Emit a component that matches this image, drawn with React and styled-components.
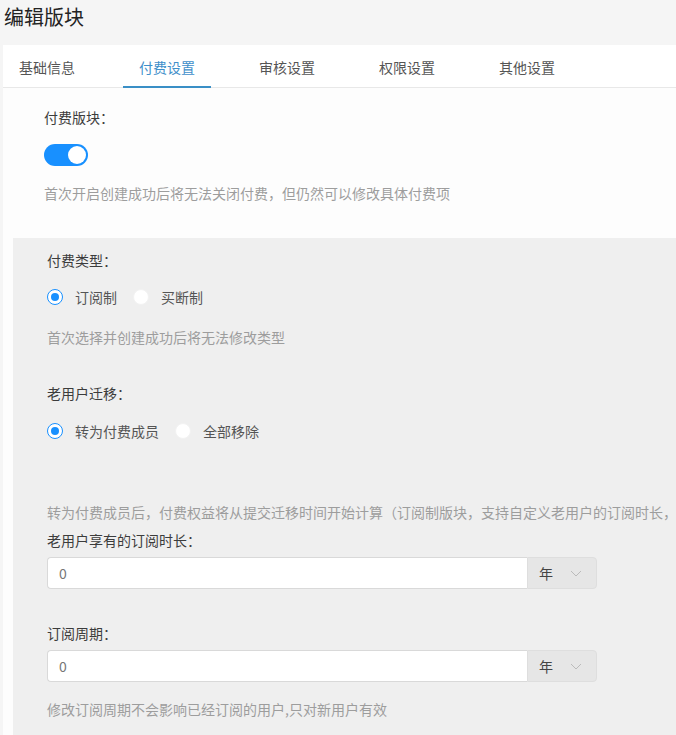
import styled, { createGlobalStyle } from "styled-components";
import { useState } from "react";

const GlobalStyle = createGlobalStyle`
  html, body {
    margin: 0;
    padding: 0;
    background: #f5f5f5;
    overflow: hidden;
  }
  body {
    font-family: "Noto Sans CJK SC", "Noto Sans", "Liberation Sans", sans-serif;
    font-size: 14px;
    color: #333;
  }
`;

const tabs = ["基础信息", "付费设置", "审核设置", "权限设置", "其他设置"];

function Radio({ checked, label, onClick }) {
  return (
    <RadioItem onClick={onClick}>
      <RadioDot checked={checked} />
      <span>{label}</span>
    </RadioItem>
  );
}

function PeriodInput({ value }) {
  return (
    <InputGroup>
      <NumberInput defaultValue={value} />
      <Addon>
        <span>年</span>
        <svg width="12" height="7" viewBox="0 0 12 7">
          <polyline points="1,1 6,6 11,1" fill="none" stroke="#bbb" strokeWidth="1" />
        </svg>
      </Addon>
    </InputGroup>
  );
}

export default function App() {
  const [activeTab, setActiveTab] = useState(1);
  const [paid, setPaid] = useState(true);
  const [payType, setPayType] = useState(0);
  const [migrate, setMigrate] = useState(0);

  return (
    <>
      <GlobalStyle />
      <Title>编辑版块</Title>
      <Card>
        <TabBar>
          {tabs.map((t, i) => (
            <Tab key={t} active={i === activeTab} onClick={() => setActiveTab(i)}>
              {t}
            </Tab>
          ))}
        </TabBar>

        <Section>
          <Label>付费版块：</Label>
          <Switch on={paid} onClick={() => setPaid(!paid)} style={{ marginTop: 17 }} />
          <Hint style={{ marginTop: 17 }}>首次开启创建成功后将无法关闭付费，但仍然可以修改具体付费项</Hint>
        </Section>

        <Panel>
          <Label>付费类型：</Label>
          <RadioRow style={{ marginTop: 17 }}>
            <Radio checked={payType === 0} label="订阅制" onClick={() => setPayType(0)} />
            <Radio checked={payType === 1} label="买断制" onClick={() => setPayType(1)} />
          </RadioRow>
          <Hint style={{ marginTop: 20 }}>首次选择并创建成功后将无法修改类型</Hint>

          <Label style={{ marginTop: 36 }}>老用户迁移：</Label>
          <RadioRow style={{ marginTop: 18 }}>
            <Radio checked={migrate === 0} label="转为付费成员" onClick={() => setMigrate(0)} />
            <Radio checked={migrate === 1} label="全部移除" onClick={() => setMigrate(1)} />
          </RadioRow>
          <Hint style={{ marginTop: 61 }}>
            转为付费成员后，付费权益将从提交迁移时间开始计算（订阅制版块，支持自定义老用户的订阅时长，
          </Hint>

          <Label style={{ marginTop: 8 }}>老用户享有的订阅时长：</Label>
          <PeriodInput value="0" />

          <Label style={{ marginTop: 34 }}>订阅周期：</Label>
          <PeriodInput value="0" />
          <Hint style={{ marginTop: 17 }}>修改订阅周期不会影响已经订阅的用户,只对新用户有效</Hint>
        </Panel>
      </Card>
    </>
  );
}

const Title = styled.h1`
  margin: 0;
  height: 45px;
  padding: 4px 0 0 4px;
  box-sizing: border-box;
  font-size: 20px;
  font-weight: normal;
  line-height: 26px;
  color: #222;
`;

const Card = styled.div`
  margin-left: 3px;
  background: #fdfdfd;
  min-height: 700px;
`;

const TabBar = styled.div`
  display: flex;
  gap: 32px;
  height: 43px;
  background: #fff;
  border-bottom: 1px solid #e8e8e8;
  box-sizing: border-box;
`;

const Tab = styled.div`
  width: 88px;
  display: flex;
  justify-content: center;
  align-items: center;
  padding-top: 3px;
  box-sizing: border-box;
  color: ${(p) => (p.active ? "#3f8fca" : "#555")};
  border-bottom: 2px solid ${(p) => (p.active ? "#3a8fc6" : "transparent")};
  margin-bottom: -1px;
  cursor: pointer;
`;

const Section = styled.div`
  padding: 19px 0 35px 41px;
  display: flex;
  flex-direction: column;
  align-items: flex-start;
`;

const Label = styled.div`
  line-height: 20px;
  color: #3c3c3c;
`;

const Hint = styled.div`
  line-height: 20px;
  color: #9d9d9d;
  white-space: nowrap;
`;

const Switch = styled.div`
  width: 44px;
  height: 22px;
  border-radius: 11px;
  background: ${(p) => (p.on ? "#1890ff" : "#ccc")};
  position: relative;
  cursor: pointer;

  &::after {
    content: "";
    position: absolute;
    top: 2px;
    left: ${(p) => (p.on ? "24px" : "2px")};
    width: 18px;
    height: 18px;
    border-radius: 50%;
    background: #fff;
  }
`;

const Panel = styled.div`
  margin-left: 10px;
  padding: 12px 0 20px 34px;
  background: #efefef;
  overflow: hidden;
  display: flex;
  flex-direction: column;
  align-items: flex-start;
`;

const RadioRow = styled.div`
  display: flex;
  gap: 16px;
  line-height: 20px;
`;

const RadioItem = styled.label`
  display: flex;
  align-items: center;
  gap: 12px;
  color: #555;
  cursor: pointer;
`;

const RadioDot = styled.span`
  width: 16px;
  height: 16px;
  box-sizing: border-box;
  border-radius: 50%;
  background: #fff;
  border: 1px solid ${(p) => (p.checked ? "#1890ff" : "#f2f2f2")};
  position: relative;

  &::after {
    content: "";
    display: ${(p) => (p.checked ? "block" : "none")};
    position: absolute;
    top: 3px;
    left: 3px;
    width: 8px;
    height: 8px;
    border-radius: 50%;
    background: #1890ff;
  }
`;

const InputGroup = styled.div`
  margin-top: 7px;
  display: flex;
  height: 32px;
`;

const NumberInput = styled.input`
  width: 480px;
  height: 32px;
  box-sizing: border-box;
  border: 1px solid #d9d9d9;
  border-right: none;
  border-radius: 4px 0 0 4px;
  background: #fff;
  padding: 0 11px;
  font-family: inherit;
  font-size: 14px;
  color: #777;
  outline: none;
`;

const Addon = styled.div`
  width: 70px;
  height: 32px;
  box-sizing: border-box;
  border: 1px solid #dedede;
  border-radius: 0 4px 4px 0;
  background: #e6e6e6;
  display: flex;
  align-items: center;
  justify-content: space-between;
  padding: 0 14px 0 11px;
  color: #444;
`;
